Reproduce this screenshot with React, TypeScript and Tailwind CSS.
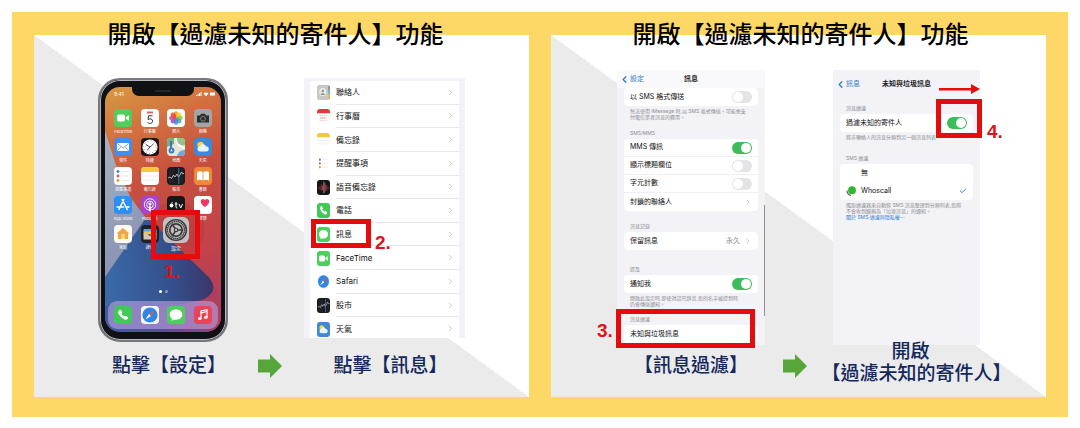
import React, { useState } from 'react';
import { Check, ChevronLeft, ChevronRight } from 'lucide-react';
import clsx from 'clsx';

type AppName =
  | 'facetime' | 'calendar' | 'photos' | 'camera' | 'mail' | 'clock' | 'maps' | 'weather'
  | 'reminders' | 'notes' | 'stocks' | 'books' | 'appstore' | 'podcasts' | 'tv' | 'health'
  | 'home' | 'wallet' | 'settings' | 'phone' | 'safari' | 'messages' | 'music'
  | 'contacts' | 'voice' | 'planner';

const PETALS = ['#f59e2b', '#f4d336', '#9ccc3c', '#4cb7a5', '#4a90d9', '#8a63c7', '#d0559b', '#ea4f3d'];

const handset = (
  <path
    d="M5.2 4.2c.8-.8 1.5-.7 2 .2l.9 1.5c.3.6.1 1-.6 1.7-.3.3 2.5 3.1 2.8 2.8.7-.7 1.2-.9 1.8-.5l1.5 1c.8.5.8 1.2 0 2-1 1-2.3 1.1-4.2-.1C7.3 11.500 5.800 10 4.700 8 3.800 6.300 4.200 5.200 5.200 4.200z"
    fill="#fff"
  />
);

const ART: Record<AppName, { bg: string; art: React.ReactNode }> = {
  facetime: {
    bg: '#4fce5b',
    art: <><rect x="3" y="5.5" width="8" height="7" rx="1.8" fill="#fff" /><path d="M11.8 8.2l3.2-2v5.6l-3.2-2z" fill="#fff" /></>,
  },
  calendar: {
    bg: '#fff',
    art: (
      <>
        <rect x="6" y="2.5" width="6" height="2" fill="#e4625c" />
        <path d="M11.5 6.8H7.5L7 10.5c2-1.3 4.6-.7 4.6 1.6 0 2.5-3.6 3.2-5 1.2" fill="none" stroke="#333" strokeWidth="1" />
      </>
    ),
  },
  planner: {
    bg: '#fdfafa',
    art: (
      <>
        <path d="M0 0h18v5H0z" fill="#dc3b3a" />
        <path d="M4 8h10M4 13.500h10" stroke="#e2b9b6" strokeWidth="1" strokeDasharray="2 1" />
        <path d="M5 10.8h8" stroke="#8d8585" strokeWidth="1.400" strokeDasharray="1.500 1" />
      </>
    ),
  },
  photos: {
    bg: '#fff',
    art: PETALS.map((color, i) => (
      <ellipse key={color} cx="9" cy="5.5" rx="2.3" ry="3.3" fill={color} opacity="0.9" transform={`rotate(${i * 45} 9 9)`} />
    )),
  },
  camera: {
    bg: '#a5a5a8',
    art: (
      <>
        <path d="M3 6.5h3l1-1.700h4l1 1.700h3v7H3z" fill="#2d2d30" />
        <circle cx="9" cy="9.8" r="2.4" fill="#2d2d30" stroke="#999" strokeWidth="0.8" />
      </>
    ),
  },
  mail: {
    bg: '#3f8ef0',
    art: (
      <>
        <rect x="3" y="5" width="12" height="8" rx="1.2" fill="#fff" />
        <path d="M3.5 5.6L9 10l5.5-4.4M3.5 12.5L7 8.8M14.5 12.5L11 8.8" fill="none" stroke="#5a9df0" strokeWidth="0.8" />
      </>
    ),
  },
  clock: {
    bg: '#17171a',
    art: (
      <>
        <circle cx="9" cy="9" r="7.6" fill="#fff" />
        <circle cx="9" cy="9" r="6.3" fill="none" stroke="#444" strokeWidth="1" strokeDasharray="0.6 2.7" />
        <path d="M9 9L4.800 6.500M9 9l3.500-3M9 9l-3 3.500" stroke="#222" strokeWidth="0.8" />
      </>
    ),
  },
  maps: {
    bg: '#e9e6d6',
    art: (
      <>
        <path d="M0 0h7v6L0 9z" fill="#66b77c" />
        <path d="M8 0h10v7c-5 1-8-2-10-7z" fill="#86ca8b" />
        <path d="M10 18c1-4 4-6 8-6v6z" fill="#72a9dc" />
        <path d="M9 0c0 6 3 9 9 10" fill="none" stroke="#fff" strokeWidth="1.5" />
        <path d="M4 3v9" stroke="#3475cf" strokeWidth="2" />
        <circle cx="4.500" cy="12.500" r="2.900" fill="#3475cf" />
        <path d="M4.500 10.500l1.300 3.300-1.300-.7-1.300.7z" fill="#fff" />
      </>
    ),
  },
  weather: {
    bg: '#3d87dd',
    art: (
      <>
        <circle cx="6.5" cy="7" r="3.2" fill="#fbd34a" />
        <path d="M6 13.500a2.500 2.500 0 010-5c.8-2.800 4.800-2.800 5.700-.3 4-.2 4 5.300.8 5.300z" fill="#e8f3fd" />
      </>
    ),
  },
  reminders: {
    bg: '#fff',
    art: (
      <>
        <circle cx="4" cy="4.5" r="1.4" fill="#3d7fd6" />
        <circle cx="4" cy="9" r="1.4" fill="#e0533f" />
        <circle cx="4" cy="13.5" r="1.4" fill="#e59a3a" />
        <path d="M7 4.5h9M7 9h9M7 13.5h9" stroke="#d9d9de" strokeWidth="0.6" />
      </>
    ),
  },
  notes: {
    bg: '#fff',
    art: <><path d="M0 0h18v5H0z" fill="#f3c93c" /><path d="M0 9h18M0 13h18" stroke="#e1e1e1" strokeWidth="0.6" /></>,
  },
  stocks: {
    bg: '#1c1c20',
    art: (
      <>
        <path d="M3 2v14M6 2v14M15 2v14" stroke="#3b3b40" strokeWidth="0.5" />
        <path d="M1 11l2-1 1.500 1.500L6.500 8 8 10l2-3 1.500 3L13 8l1.500-3L16 7l1-1" fill="none" stroke="#d6d6da" strokeWidth="0.8" />
        <path d="M11.800 1v16" stroke="#3c8fd0" strokeWidth="0.8" />
      </>
    ),
  },
  books: {
    bg: '#ee8a35',
    art: <path d="M3 5c2-1 4-1 5.600 0v8.500c-1.600-1-3.600-1-5.600 0zM15 5c-2-1-4-1-5.600 0v8.500c1.600-1 3.600-1 5.600 0z" fill="#fff" />,
  },
  appstore: {
    bg: '#2f8ff0',
    art: <path d="M9.800 3.500L5 13.500M8.200 3.500l5 10M3 11h6.500M12 11h3" stroke="#fff" strokeWidth="1.5" strokeLinecap="round" fill="none" />,
  },
  podcasts: {
    bg: '#a246d0',
    art: (
      <g fill="none" stroke="#fff">
        <circle cx="9" cy="8.5" r="5.7" strokeWidth="0.9" />
        <circle cx="9" cy="8.5" r="3.4" strokeWidth="0.9" />
        <circle cx="9" cy="8" r="1.3" fill="#fff" strokeWidth="0.4" />
        <path d="M9 11v3.500" strokeWidth="2" strokeLinecap="round" />
      </g>
    ),
  },
  tv: {
    bg: '#17171a',
    art: (
      <>
        <circle cx="4.5" cy="9.5" r="1.9" fill="#fff" />
        <path d="M4.500 7.300l1-1.300M9 6v5q0 1 1.300 1M7.800 8h2.800M12 8l1.700 4L15.500 8" stroke="#fff" strokeWidth="1" fill="none" />
      </>
    ),
  },
  health: {
    bg: '#fff',
    art: <path d="M11 11C5.500 7.500 6 3 9 3c1.200 0 2 1 2 1.600C11 4 11.800 3 13 3c3 0 3.500 4.500-2 8z" fill="#ee3a63" />,
  },
  home: {
    bg: '#fdfaf3',
    art: <><path d="M9 3l6.500 5.500H14V14H4V8.500H2.500z" fill="#f2a93b" /><rect x="7.3" y="9" width="3.4" height="5" fill="#fbd68d" /></>,
  },
  wallet: {
    bg: '#222226',
    art: (
      <>
        <rect x="2.5" y="4" width="13" height="3" fill="#5ba4d8" />
        <rect x="2.5" y="6.5" width="13" height="3" fill="#efc65c" />
        <path d="M2.500 9h4c1 2 4 2 5 0h4v5.500h-13z" fill="#cfc9b8" />
      </>
    ),
  },
  settings: {
    bg: '#c3c1c2',
    art: (
      <g fill="none" stroke="#3c3a3d">
        <circle cx="9" cy="9" r="7.2" strokeWidth="1" />
        <circle cx="9" cy="9" r="5.9" strokeWidth="0.9" strokeDasharray="1 0.3" />
        <circle cx="9" cy="9" r="4.3" strokeWidth="1.2" />
        <circle cx="9" cy="9" r="1.2" strokeWidth="0.8" />
        <path d="M10.200 9H14M8.400 8L6.200 4.600M8.400 10l-2.200 3.400" strokeWidth="1.1" />
      </g>
    ),
  },
  phone: { bg: '#3fca55', art: handset },
  safari: {
    bg: '#f4f6f9',
    art: (
      <>
        <circle cx="9" cy="9" r="7.6" fill="#2f86e4" />
        <path d="M13.500 4.500L8 8l2 2z" fill="#e6564c" />
        <path d="M4.500 13.500L8 8l2 2z" fill="#fff" />
      </>
    ),
  },
  messages: {
    bg: '#4bd05c',
    art: <path d="M9 3.500c3.800 0 6.300 2.300 6.300 5.100S12.800 13.700 9 13.700c-.8 0-1.500-.1-2.200-.3-.7.7-1.500 1-2.600 1.100.6-.6.8-1.200.8-1.900C3.500 11.600 2.700 10.200 2.700 8.600c0-2.800 2.500-5.100 6.300-5.100z" fill="#fff" />,
  },
  music: {
    bg: '#ee4257',
    art: (
      <>
        <path d="M7 12.500V5l6-1.300v7.500M7 6.800l6-1.300" fill="none" stroke="#fff" strokeWidth="1.2" />
        <ellipse cx="5.8" cy="12.7" rx="1.8" ry="1.4" fill="#fff" />
        <ellipse cx="11.8" cy="11.5" rx="1.8" ry="1.4" fill="#fff" />
      </>
    ),
  },
  contacts: {
    bg: '#b9b9b4',
    art: (
      <>
        <path d="M15 1v5h3V1z" fill="#8a8f96" />
        <path d="M15 6h3v5h-3z" fill="#63b5d8" />
        <path d="M15 11h3v6h-3z" fill="#e9b54c" />
        <rect width="15.5" height="18" rx="3" fill="#c9c9c3" />
        <circle cx="8" cy="8.5" r="5" fill="#e9e9e5" />
        <circle cx="8" cy="7.2" r="1.6" fill="#8e8e8c" />
        <path d="M5 12c.5-3 5.500-3 6 0z" fill="#8e8e8c" />
      </>
    ),
  },
  voice: {
    bg: '#151517',
    art: (
      <>
        <path d="M2 9v1M4 7.500v4M6 5v8M13 6v7M15 8v3M16.500 9v1" stroke="#b8383d" strokeWidth="1" />
        <path d="M7.800 7v5M11.200 4v10" stroke="#e2504c" strokeWidth="1" />
        <path d="M9.500 2v14" stroke="#d9d9dd" strokeWidth="0.8" />
      </>
    ),
  },
};

function AppIcon({ name, className }: { name: AppName; className: string }) {
  const { bg, art } = ART[name];
  return (
    <svg viewBox="0 0 18 18" preserveAspectRatio="none" aria-hidden="true" className={clsx('block shrink-0 overflow-hidden', className)}>
      <rect width="18" height="18" fill={bg} />
      {art}
    </svg>
  );
}

const HOME_APPS: { icon: AppName; label: string }[] = [
  { icon: 'facetime', label: 'FaceTime' },
  { icon: 'calendar', label: '行事曆' },
  { icon: 'photos', label: '照片' },
  { icon: 'camera', label: '相機' },
  { icon: 'mail', label: '郵件' },
  { icon: 'clock', label: '時鐘' },
  { icon: 'maps', label: '地圖' },
  { icon: 'weather', label: '天氣' },
  { icon: 'reminders', label: '提醒事項' },
  { icon: 'notes', label: '備忘錄' },
  { icon: 'stocks', label: '股市' },
  { icon: 'books', label: '書籍' },
  { icon: 'appstore', label: 'App Store' },
  { icon: 'podcasts', label: 'Podcast' },
  { icon: 'tv', label: 'TV' },
  { icon: 'health', label: '健康' },
  { icon: 'home', label: '家庭' },
  { icon: 'wallet', label: '錢包' },
];

const DOCK_APPS: { icon: AppName; label: string }[] = [
  { icon: 'phone', label: '電話' },
  { icon: 'safari', label: 'Safari' },
  { icon: 'messages', label: '訊息' },
  { icon: 'music', label: '音樂' },
];

const SETTINGS_ROWS: { icon: AppName; label: string }[] = [
  { icon: 'contacts', label: '聯絡人' },
  { icon: 'planner', label: '行事曆' },
  { icon: 'notes', label: '備忘錄' },
  { icon: 'reminders', label: '提醒事項' },
  { icon: 'voice', label: '語音備忘錄' },
  { icon: 'phone', label: '電話' },
  { icon: 'messages', label: '訊息' },
  { icon: 'facetime', label: 'FaceTime' },
  { icon: 'safari', label: 'Safari' },
  { icon: 'stocks', label: '股市' },
  { icon: 'weather', label: '天氣' },
];

function Wallpaper() {
  return (
    <svg viewBox="0 0 115 246" preserveAspectRatio="none" aria-hidden="true" className="absolute inset-0 h-full w-full">
      <defs>
        <linearGradient id="wall-sky" x1="0" y1="0" x2="0.2" y2="1">
          <stop offset="0" stopColor="#d99a42" />
          <stop offset="0.22" stopColor="#d27040" />
          <stop offset="0.45" stopColor="#c64f3e" />
          <stop offset="0.8" stopColor="#c4424a" />
          <stop offset="1" stopColor="#b03f5c" />
        </linearGradient>
        <linearGradient id="wall-haze" x1="0" y1="0" x2="0.3" y2="1">
          <stop offset="0" stopColor="#aab0c0" />
          <stop offset="1" stopColor="#8792b2" />
        </linearGradient>
        <linearGradient id="wall-blue" x1="0" y1="0.7" x2="1" y2="0.6">
          <stop offset="0" stopColor="#3a6aa8" />
          <stop offset="0.6" stopColor="#34508c" />
          <stop offset="1" stopColor="#3b3468" />
        </linearGradient>
        <linearGradient id="wall-base" x1="0" y1="0" x2="1" y2="0">
          <stop offset="0" stopColor="#3b5fa4" />
          <stop offset="0.5" stopColor="#56509a" />
          <stop offset="0.85" stopColor="#8c4480" />
          <stop offset="1" stopColor="#b03f5c" />
        </linearGradient>
      </defs>
      <path d="M0 0h115v246H0z" fill="url(#wall-sky)" />
      <circle cx="70" cy="144" r="29" fill="#b33c3e" opacity="0.5" />
      <path d="M0 44l12 38 14 30 18 24L0 196z" fill="url(#wall-haze)" />
      <path d="M0 200l60 8 55 14v24H0z" fill="url(#wall-base)" />
      <path d="M38 135q4-5 9 1l56 55q11 14-5 22-30 10-98 6v-28z" fill="url(#wall-blue)" />
    </svg>
  );
}

function HomeButton({ icon, label }: { icon: AppName; label: string }) {
  return (
    <button type="button" className="flex w-[18px] flex-col items-center">
      <AppIcon name={icon} className="h-[18px] w-[18px] rounded-[4px]" />
      <span className="mt-[2px] whitespace-nowrap text-[4px] leading-[5px] text-white">{label}</span>
    </button>
  );
}

function PhoneMockup() {
  return (
    <div className="relative h-[264px] w-[130px] rounded-[22px] border-2 border-[#77797d] bg-[#101114] px-[5px] pt-[7px] pb-2 shadow-[inset_0_0_0_1px_#b6b8bb]">
      <div className="relative flex h-full flex-col overflow-hidden rounded-[15px]">
        <Wallpaper />
        <div className="relative flex h-[22px] items-start justify-between px-[9px] pt-1 text-[5px] leading-[6px] text-white">
          <span>9:41</span>
          <svg viewBox="0 0 20 6" aria-hidden="true" className="-mr-1 h-[6px] w-5 fill-white">
            <path d="M0 4h1v1H0zM1.500 3h1v2h-1zM3 2h1v3H3zM4.500 1h1v4h-1zM7.500 2.500q2.500-2 5 0L10 5.200zM14 1.500h5v3h-5z" />
          </svg>
        </div>
        <div className="absolute top-0 left-1/2 flex h-[9px] w-[62px] -translate-x-1/2 justify-center rounded-b-[7px] bg-[#101114] pt-[3px]">
          <span className="h-[2px] w-4 rounded-full bg-[#25272c]" />
        </div>
        <div className="relative grid grid-cols-4 justify-items-center gap-y-1 px-[5px]">
          {HOME_APPS.map((app) => (
            <HomeButton key={app.icon} {...app} />
          ))}
        </div>
        <div className="relative mt-auto mb-2 flex justify-center gap-[3px]">
          <span className="h-[3px] w-[3px] rounded-full bg-white" />
          <span className="h-[3px] w-[3px] rounded-full bg-white/40" />
        </div>
        <div className="relative mx-[3px] mb-[3px] flex h-7 items-center justify-around rounded-[9px] bg-[#c0a0e0]/60 px-[2px]">
          {DOCK_APPS.map((app) => (
            <button key={app.icon} type="button" aria-label={app.label}>
              <AppIcon name={app.icon} className="h-[18px] w-[18px] rounded-[4px]" />
            </button>
          ))}
        </div>
      </div>
      {/* enlarged settings app */}
      <button type="button" className="absolute top-[137px] left-[63px] flex w-[26px] flex-col items-center">
        <AppIcon name="settings" className="h-[26px] w-[26px] rounded-[6px]" />
        <span className="mt-[2px] text-[5px] leading-[6px] text-white">設定</span>
      </button>
      <Highlight className="top-[130px] left-[51px] h-[49px] w-[49px]" />
      <StepNumber className="top-[182px] left-[64px]">1.</StepNumber>
    </div>
  );
}

function Highlight({ className }: { className: string }) {
  return <div className={clsx('pointer-events-none absolute border-5 border-[#e60b0f]', className)} />;
}

function StepNumber({ className, children }: { className: string; children: React.ReactNode }) {
  return (
    <span className={clsx("absolute font-['Liberation_Sans',sans-serif] text-[19px] leading-[20px] font-bold text-[#dd1319]", className)}>
      {children}
    </span>
  );
}

function SettingsList() {
  return (
    <div className="relative w-[161px]">
      <div className="h-[260px] overflow-hidden bg-[#f3f3f7] px-[6px] pt-[3px]">
        <ul className="grid h-[260px] auto-rows-fr bg-white">
          {SETTINGS_ROWS.map(({ icon, label }) => (
            <li key={icon}>
              <button type="button" className="flex h-full w-full items-center gap-[6px] pl-[7px] text-left text-[8px] text-[#111]">
                <AppIcon
                  name={icon}
                  className={clsx('h-[15px] w-[13px]', icon === 'safari' ? 'rounded-full' : 'rounded-[3px]')}
                />
                <span className="flex h-full flex-1 items-center justify-between border-b border-[#e8e8ec] pr-1">
                  {label}
                  <ChevronRight className="h-[9px] w-[9px] text-[#b5b5ba]" />
                </span>
              </button>
            </li>
          ))}
        </ul>
      </div>
      <Highlight className="top-[141px] left-[7px] h-[29px] w-[60px]" />
      <StepNumber className="top-[155px] left-[71px]">2.</StepNumber>
    </div>
  );
}

function NavBar({ back, title, className }: { back: string; title: string; className: string }) {
  return (
    <div className={clsx('relative flex items-center justify-center text-[7px]', className)}>
      <button type="button" className="absolute left-[2px] flex items-center text-[#3580c4]">
        <ChevronLeft className="h-[11px] w-[11px]" strokeWidth={3} />
        {back}
      </button>
      <h3 className="font-bold text-[#1c1c1e]">{title}</h3>
    </div>
  );
}

function Row({ children }: { children: React.ReactNode }) {
  return (
    <div className="flex h-[18px] items-center justify-between border-b border-[#f0f0f3] px-[6px] text-[7px] text-[#111] last:border-b-0">
      {children}
    </div>
  );
}

function SwitchRow({ label, initial = false }: { label: string; initial?: boolean }) {
  const [on, setOn] = useState(initial);
  return (
    <label className="flex h-[18px] items-center justify-between border-b border-[#f0f0f3] px-[6px] text-[7px] text-[#111] last:border-b-0">
      {label}
      <input
        type="checkbox"
        role="switch"
        checked={on}
        onChange={(e) => setOn(e.target.checked)}
        className="h-3 w-5 shrink-0 appearance-none rounded-full bg-[#e4e4e7] p-px before:block before:h-[10px] before:w-[10px] before:rounded-full before:bg-white checked:bg-[#3bbd5b] checked:before:ml-2"
      />
    </label>
  );
}

function Card({ children }: { children: React.ReactNode }) {
  return <div className="rounded-[4px] bg-white">{children}</div>;
}

function GroupLabel({ children }: { children: React.ReactNode }) {
  return <h4 className="px-[6px] pb-[3px] text-[5px] leading-[6px] text-[#8c8c91]">{children}</h4>;
}

function Hint({ children }: { children: React.ReactNode }) {
  return <p className="px-[6px] pt-[2px] text-[5px] leading-[6px] whitespace-nowrap text-[#8c8c91]">{children}</p>;
}

function MessagesSettings() {
  return (
    <div className="relative w-[148px]">
      <div className="h-[275px] overflow-hidden bg-[#f2f2f7]">
        <NavBar back="設定" title="訊息" className="h-[18px] bg-[#f9f9fb]" />
        <div className="px-[7px]">
          <Card><SwitchRow label="以 SMS 格式傳送" /></Card>
          <Hint>無法使用 iMessage 時,以 SMS 格式傳送。可能需支<br />付電信業者訊息的費用。</Hint>
          <div className="pt-[10px]">
            <GroupLabel>SMS/MMS</GroupLabel>
            <Card>
              <SwitchRow label="MMS 傳訊" initial />
              <SwitchRow label="顯示標題欄位" />
              <SwitchRow label="字元計數" />
              <Row>
                封鎖的聯絡人
                <ChevronRight className="h-2 w-2 text-[#b5b5ba]" />
              </Row>
            </Card>
          </div>
          <div className="pt-[12px]">
            <GroupLabel>訊息記錄</GroupLabel>
            <Card>
              <Row>
                保留訊息
                <span className="flex items-center gap-1 text-[#8c8c91]">
                  永久
                  <ChevronRight className="h-2 w-2 text-[#b5b5ba]" />
                </span>
              </Row>
            </Card>
          </div>
          <div className="pt-[16px]">
            <GroupLabel>提及</GroupLabel>
            <Card><SwitchRow label="通知我" initial /></Card>
            <Hint>開啟此設定時,即使對話已靜音,您的名字被提到時<br />仍會傳送通知。</Hint>
          </div>
          <div className="pt-[9px]">
            <GroupLabel>訊息過濾</GroupLabel>
            <Card><Row>未知與垃圾訊息</Row></Card>
          </div>
        </div>
      </div>
      <div className="absolute top-[135px] right-0 h-[111px] w-px bg-[#8f8f94]" />
      <Highlight className="top-[239px] -left-px h-[39px] w-[139px]" />
      <StepNumber className="top-[251px] left-[-20px]">3.</StepNumber>
    </div>
  );
}

function FilterSettings() {
  return (
    <div className="relative w-[147px]">
      <div className="h-[275px] overflow-hidden bg-[#f2f2f7]">
        <NavBar back="訊息" title="未知與垃圾訊息" className="h-[28px]" />
        <div className="px-[7px] pt-[7px]">
          <GroupLabel>訊息過濾</GroupLabel>
          <Card><SwitchRow label="過濾未知的寄件人" initial /></Card>
          <Hint>將非聯絡人的訊息分類到另一個訊息列表。</Hint>
          <div className="pt-[15px]">
            <GroupLabel>SMS 過濾</GroupLabel>
            <Card>
              <button type="button" className="flex h-[18px] w-full items-center pl-[21px] text-[7px] text-[#111]">
                無
              </button>
              <button type="button" className="flex h-[18px] w-full items-center gap-[5px] px-[6px] text-[7px] text-[#111]">
                <svg viewBox="0 0 10 10" aria-hidden="true" className="h-[10px] w-[10px]">
                  <circle cx="6" cy="4.2" r="3.9" fill="#2fb52f" />
                  <path d="M1 4.500q0 4 4 5" fill="none" stroke="#5c6b5c" strokeWidth="1.2" />
                </svg>
                Whoscall
                <Check className="ml-auto h-2 w-2 text-[#2f7fd0]" strokeWidth={3} />
              </button>
            </Card>
            <Hint>
              選取過濾器來自動將 SMS 訊息整理到分類列表,您將<br />
              不會收到歸類為「垃圾訊息」的通知。<br />
              <a href="#privacy" className="text-[#2f7fd0]">關於 SMS 過濾與隱私權⋯</a>
            </Hint>
          </div>
        </div>
      </div>
      <svg viewBox="0 0 41 10" aria-hidden="true" className="absolute top-[14px] right-0 h-[10px] w-[41px] fill-[#e60b0f]">
        <path d="M0 4h32V0l9 5-9 5V6.500H0z" />
      </svg>
      <Highlight className="top-[29px] left-[103px] h-[39px] w-[46px]" />
      <StepNumber className="top-[52px] left-[154px]">4.</StepNumber>
    </div>
  );
}

function NextArrow({ className }: { className: string }) {
  return (
    <svg viewBox="0 0 24 26" aria-hidden="true" className={clsx('h-[26px] w-6 shrink-0', className)}>
      <path d="M0 6.500h12V1l12 12-12 12v-5.500H0z" fill="#57a639" />
    </svg>
  );
}

function Step({ caption, className, children }: { caption: React.ReactNode; className: string; children: React.ReactNode }) {
  return (
    <figure className="flex flex-col items-center">
      {children}
      <figcaption className={clsx('relative z-10 text-center text-[19px] font-medium whitespace-nowrap text-[#14285c]', className)}>
        {caption}
      </figcaption>
    </figure>
  );
}

function Slide({ className, titleClass, children }: { className: string; titleClass: string; children: React.ReactNode }) {
  return (
    <section className={clsx('flex flex-1 pt-[23px] pb-5', className)}>
      <div className="flex-1 bg-[linear-gradient(to_top_right,#ebebeb_50%,#ffffff_50%)]">
        <h2 className={clsx('-mt-[14px] text-center text-[24px] leading-[28px] font-medium whitespace-nowrap text-black', titleClass)}>
          開啟【過濾未知的寄件人】功能
        </h2>
        {children}
      </div>
    </section>
  );
}

export default function App() {
  return (
    <main className="bg-[#fefefe] p-3 font-['Inter','Noto_Sans_CJK_TC',sans-serif]">
      <div className="flex bg-[#fdd866]">
        <Slide className="pl-[22px]" titleClass="pr-3">
          <div className="flex items-start justify-center pt-[29px] pb-[18px]">
            <Step caption="點擊【設定】" className="mt-3 pl-3 leading-[24px]">
              <PhoneMockup />
            </Step>
            <NextArrow className="mt-[275px] mr-[22px] ml-[30px]" />
            <Step caption="點擊【訊息】" className="mt-4 pl-3 leading-[24px]">
              <SettingsList />
            </Step>
          </div>
        </Slide>
        <Slide className="px-[22px]" titleClass="pl-1">
          <div className="flex items-start justify-center pt-[21px] pb-[11px]">
            <Step caption="【訊息過濾】" className="mt-[9px] leading-[24px]">
              <MessagesSettings />
            </Step>
            <NextArrow className="mt-[283px] mr-[26px] ml-[18px]" />
            <div className="w-[147px]">
              <Step
                caption={<><span className="pr-3">開啟</span><br />【過濾未知的寄件人】</>}
                className="-mt-1 pl-5 leading-[22px]"
              >
                <FilterSettings />
              </Step>
            </div>
          </div>
        </Slide>
      </div>
    </main>
  );
}
